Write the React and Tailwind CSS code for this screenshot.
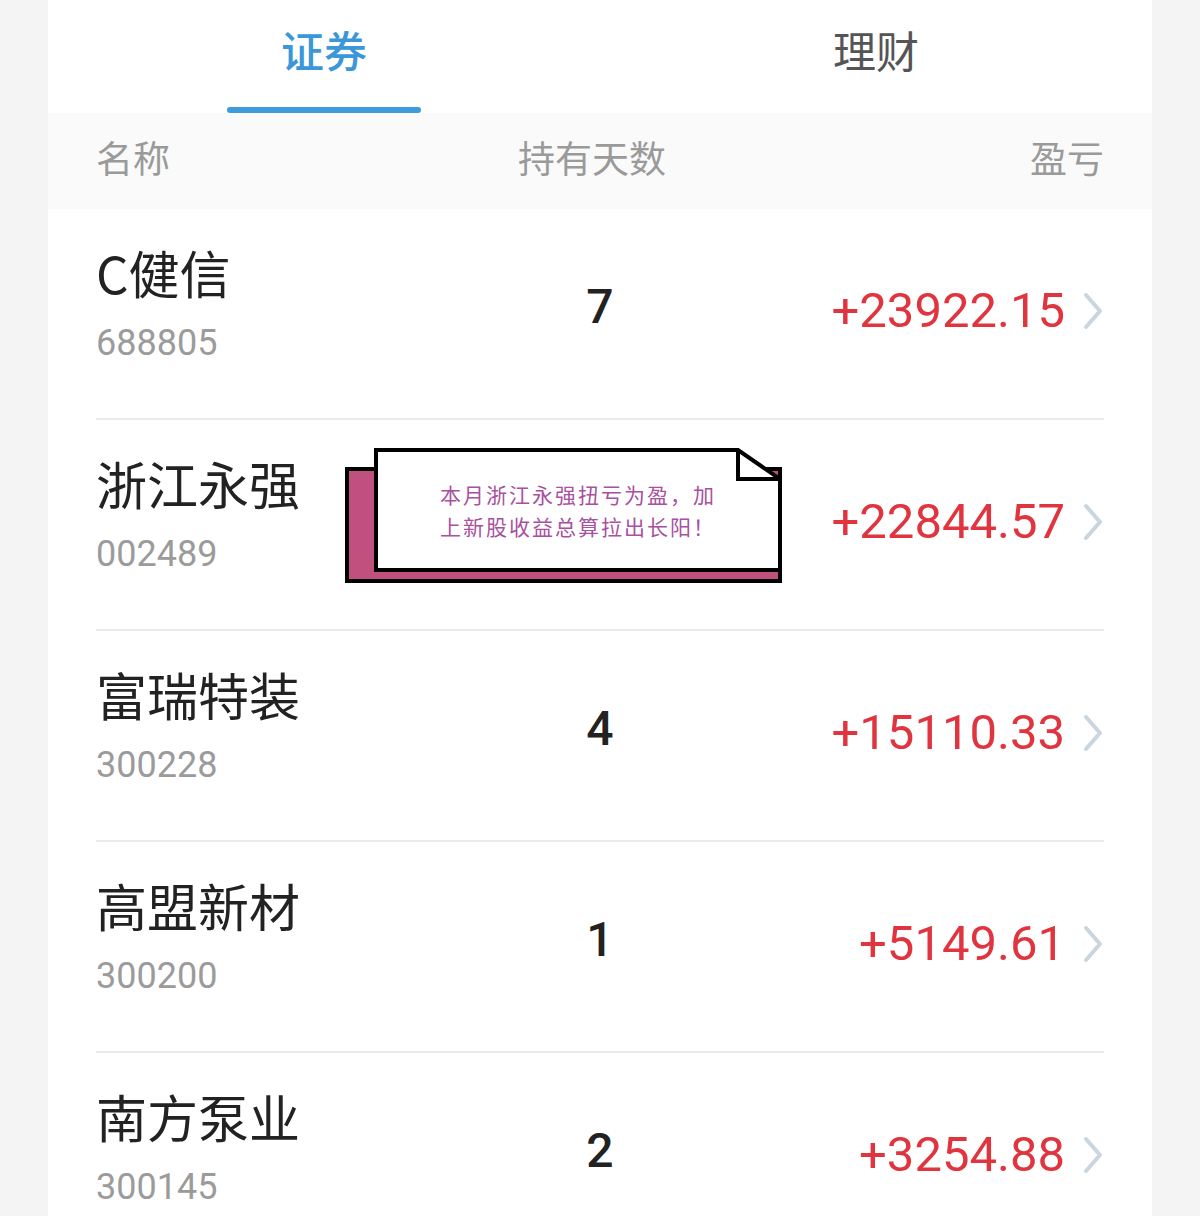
const CJK = { fontFamily: '"Noto Sans CJK SC", "Noto Sans", sans-serif' };
const NUM = { fontFamily: 'Roboto, "Noto Sans CJK SC", sans-serif' };

const rows = [
  { name: 'C健信', code: '688805', days: '7', pnl: '+23922.15' },
  { name: '浙江永强', code: '002489', days: '', pnl: '+22844.57' },
  { name: '富瑞特装', code: '300228', days: '4', pnl: '+15110.33' },
  { name: '高盟新材', code: '300200', days: '1', pnl: '+5149.61' },
  { name: '南方泵业', code: '300145', days: '2', pnl: '+3254.88' },
];

function Chevron() {
  return (
    <svg width="22" height="38" viewBox="0 0 22 38" className="shrink-0">
      <path d="M4 3 L18 19 L4 35" fill="none" stroke="#c9d5df" strokeWidth="4" strokeLinecap="round" strokeLinejoin="round" />
    </svg>
  );
}

function Callout() {
  return (
    <div className="absolute left-[345px] top-[448px] w-[437px] h-[135px]">
      <svg width="437" height="135" viewBox="0 0 437 135" className="absolute inset-0">
        <rect x="2" y="21" width="433" height="112" fill="#c0507e" stroke="#000" strokeWidth="4" />
        <path d="M31 2 L393 2 L435 31 L435 122 L31 122 Z" fill="#fff" stroke="#000" strokeWidth="4" strokeLinejoin="miter" />
        <path d="M393 2 L393 31 L435 31" fill="none" stroke="#000" strokeWidth="4" />
      </svg>
      <div className="absolute left-[31px] top-[2px] w-[404px] h-[120px] flex items-center justify-center">
        <p className="text-[21px] leading-[32px] tracking-[2px] text-[#a9509f] text-center" style={CJK}>
          本月浙江永强扭亏为盈，加<br />上新股收益总算拉出长阳！
        </p>
      </div>
    </div>
  );
}

export default function App() {
  return (
    <div className="w-[1200px] h-[1216px] overflow-hidden bg-[#f4f4f4] flex justify-center" style={CJK}>
      <div className="relative w-[1104px] bg-white">
        {/* tabs */}
        <div className="h-[113px] flex">
          <div className="flex-1 relative flex items-center justify-center">
            <span className="text-[43px] font-medium text-[#3b97d7] -mt-[14px]">证券</span>
            <div className="absolute bottom-0 left-[179px] w-[194px] h-[6px] rounded-full bg-[#3d9bdb]" />
          </div>
          <div className="flex-1 flex items-center justify-center">
            <span className="text-[43px] text-[#555] -mt-[14px]">理财</span>
          </div>
        </div>

        {/* header */}
        <div className="h-[96px] bg-[#fafafa] px-[48px] pb-[6px] grid grid-cols-3 items-center text-[37px] text-[#9a9a9a]">
          <span>名称</span>
          <span className="text-center pr-[16px]">持有天数</span>
          <span className="text-right">盈亏</span>
        </div>

        {/* list */}
        <div className="px-[48px]">
          {rows.map((r) => (
            <div key={r.code} className="h-[211px] border-b-2 border-[#ebebeb] grid grid-cols-3 items-start">
              <div className="pt-[33px]">
                <div className="text-[51px] leading-[60px] text-[#222]">{r.name}</div>
                <div className="mt-[19px] text-[36px] leading-[44px] text-[#9b9b9b]" style={NUM}>{r.code}</div>
              </div>
              <div className="pt-[70px] text-center text-[48px] leading-[56px] font-medium text-[#222]" style={NUM}>{r.days}</div>
              <div className="pt-[72px] flex items-center justify-end gap-[17px]">
                <span className="text-[49px] leading-[60px] text-[#e0353f]" style={NUM}>{r.pnl}</span>
                <Chevron />
              </div>
            </div>
          ))}
        </div>

        <div className="absolute left-[-48px] top-0">
          <Callout />
        </div>
      </div>
    </div>
  );
}
